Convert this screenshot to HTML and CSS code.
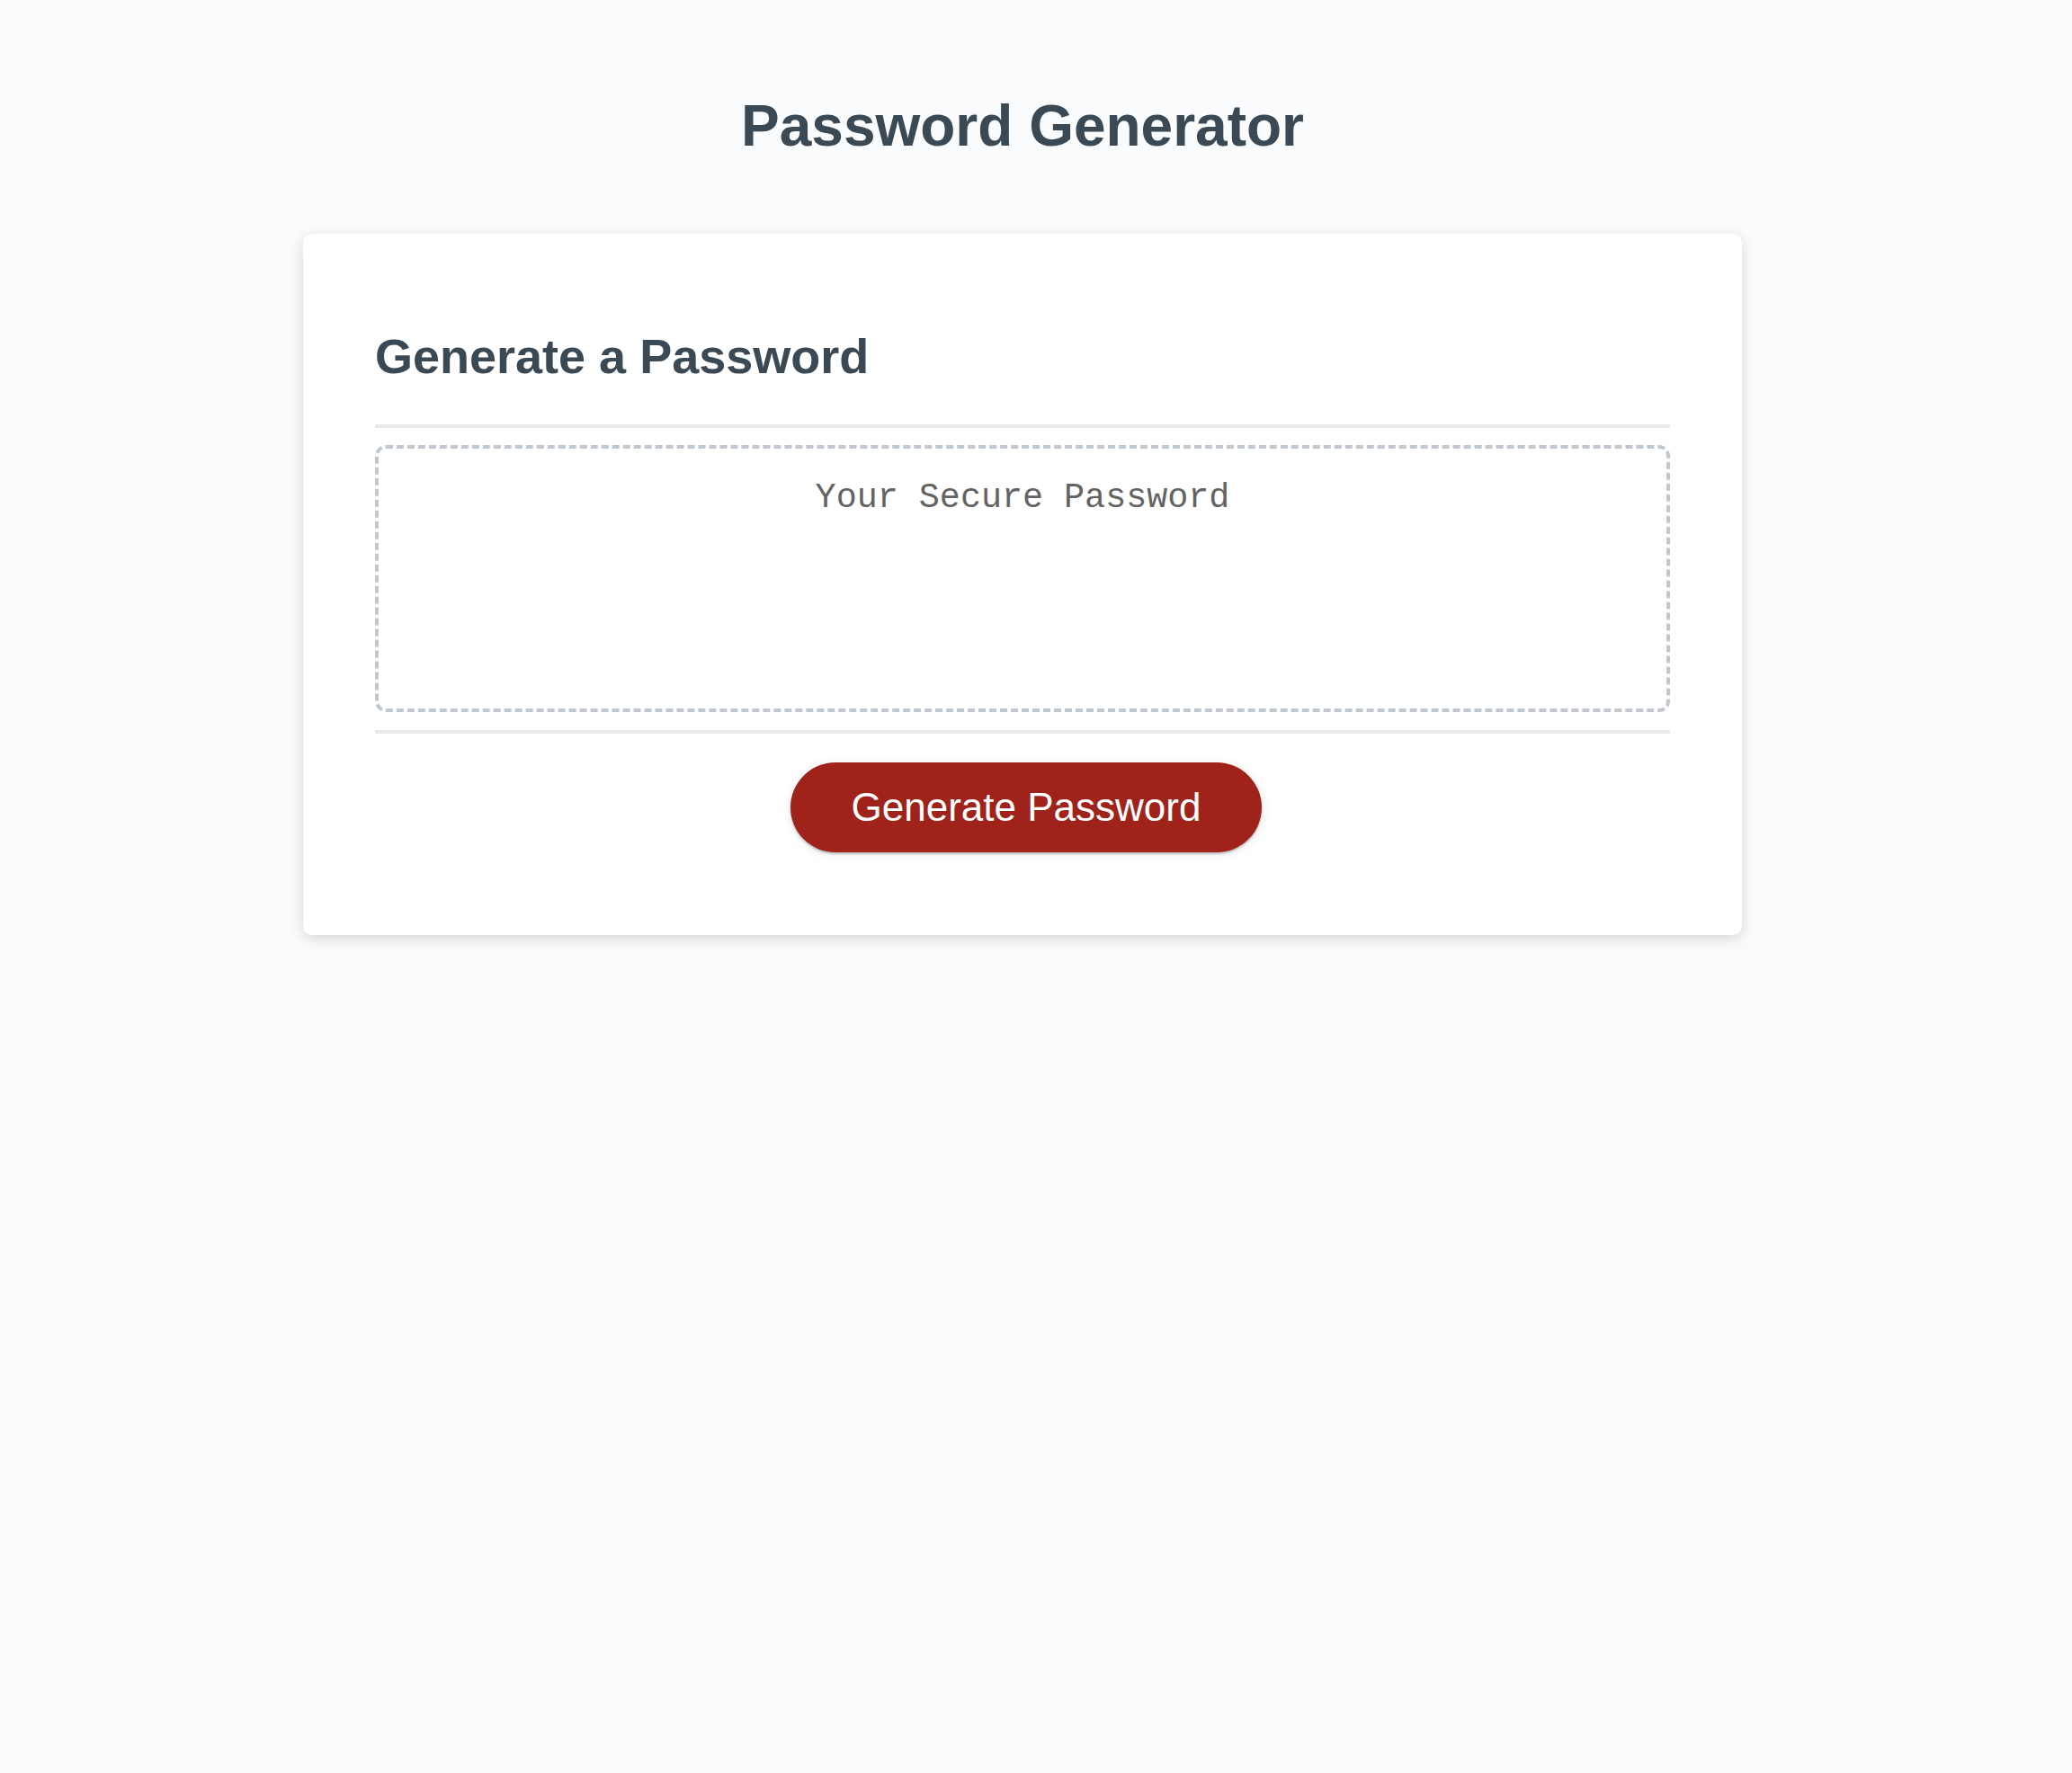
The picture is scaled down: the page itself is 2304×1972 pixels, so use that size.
FILE: index.html
```html
<!DOCTYPE html>
<html lang="en">
<head>
<meta charset="UTF-8">
<title>Password Generator</title>
<link rel="stylesheet" href="styles.css">
</head>
<body>
<div class="wrapper">
  <header class="page-header">
    <h1 class="page-title">Password Generator</h1>
  </header>
  <div class="card">
    <div class="card-header">
      <h2 class="card-title">Generate a Password</h2>
    </div>
    <div class="card-body">
      <textarea readonly class="password" placeholder="Your Secure Password" aria-label="Generated Password"></textarea>
    </div>
    <div class="card-footer">
      <button class="btn">Generate Password</button>
    </div>
  </div>
</div>
</body>
</html>
```
FILE: styles.css
```css
html, body {
  margin: 0;
  padding: 0;
}
body {
  background-color: #f9fbfd;
  font-family: "Liberation Sans", Arial, Helvetica, sans-serif;
  min-height: 1972px;
}
.wrapper {
  padding: 104px 86px 40px 56px;
}
.page-header {
  text-align: center;
  color: #3b4954;
}
.page-title {
  margin: 0 0 84px;
  font-size: 64px;
  line-height: 72px;
  font-weight: 700;
}
.card {
  box-sizing: border-box;
  max-width: 1600px;
  margin: 0 auto;
  background: #ffffff;
  border-radius: 10px;
  box-shadow: 0 4px 16px rgba(0, 0, 0, 0.15);
  padding: 60px 80px;
  color: #3b4954;
  font-size: 36px;
}
.card-title {
  margin: 45px 0;
  font-size: 54px;
  line-height: 62px;
  font-weight: 700;
}
.card-header {
  border-bottom: 4px solid #e7e9eb;
}
.card-body {
  padding: 19px 0 20px;
}
.password {
  display: block;
  box-sizing: border-box;
  width: 100%;
  height: 297px;
  margin: 0;
  padding: 34px 30px 171px;
  border: 4px dashed #c0c7cf;
  border-radius: 12px;
  font-family: "Liberation Mono", "Courier New", monospace;
  font-size: 38.4px;
  line-height: 42px;
  text-align: center;
  resize: none;
  overflow: hidden;
  outline: none;
  background: #ffffff;
  color: #3b4954;
}
.password::placeholder {
  color: #636363;
  opacity: 1;
}
.card-footer {
  border-top: 4px solid #e7e9eb;
  display: flex;
  justify-content: center;
}
.btn {
  margin: 32px 32px 32px 40px;
  padding: 28px 68px;
  border: none;
  border-radius: 50px;
  background-color: #9f231b;
  color: #ffffff;
  font-family: "Liberation Sans", Arial, Helvetica, sans-serif;
  font-size: 44px;
  line-height: 44px;
  cursor: pointer;
  box-shadow: 0 2px 12px rgba(0, 0, 0, 0.1), 0 2px 2px rgba(0, 0, 0, 0.2);
}
```
